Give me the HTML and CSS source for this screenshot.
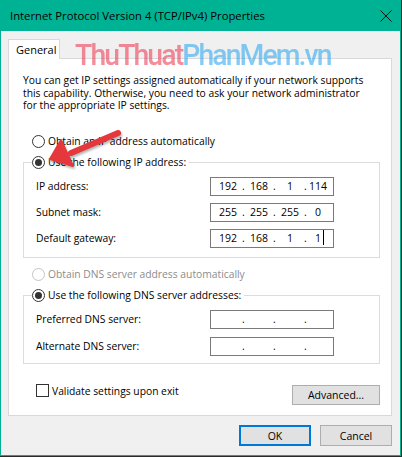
FILE: index.html
```html
<!DOCTYPE html>
<html>
  <head>
    <meta charset="utf-8" />
    <title>Internet Protocol Version 4 (TCP/IPv4) Properties</title>
    <link rel="stylesheet" href="styles.css">
  </head>

  <body>
    <div class="window">
      <div class="titlebar">
        <span class="title">Internet Protocol Version 4 (TCP/IPv4) Properties</span>
        <svg class="close" width="12" height="12" viewBox="0 0 12 12">
          <path d="M0.5 0.5 L11.5 11.5 M11.5 0.5 L0.5 11.5" stroke="#111" stroke-width="1" fill="none" />
        </svg>
      </div>

      <div class="body">
        <div class="tabs">
          <div class="tab">General</div>
        </div>

        <div class="panel">
          <p class="intro">
            You can get IP settings assigned automatically if your network supports<br />
            this capability. Otherwise, you need to ask your network administrator<br />
            for the appropriate IP settings.
          </p>

          <div class="option option-first">
            <span class="radio"></span>
            <span>Obtain an IP address automatically</span>
          </div>

          <fieldset class="group">
            <legend class="option">
              <span class="radio checked"></span>
              <span>Use the following IP address:</span>
            </legend>
            <div class="row">
              <span class="label">IP address:</span>
              <div class="ip">
                <span class="oct">192</span><span class="dot">.</span>
                <span class="oct">168</span><span class="dot">.</span>
                <span class="oct">1</span><span class="dot">.</span>
                <span class="oct last">114</span>
              </div>
            </div>
            <div class="row">
              <span class="label">Subnet mask:</span>
              <div class="ip">
                <span class="oct">255</span><span class="dot">.</span>
                <span class="oct">255</span><span class="dot">.</span>
                <span class="oct">255</span><span class="dot">.</span>
                <span class="oct last">0</span>
              </div>
            </div>
            <div class="row">
              <span class="label">Default gateway:</span>
              <div class="ip">
                <span class="oct">192</span><span class="dot">.</span>
                <span class="oct">168</span><span class="dot">.</span>
                <span class="oct">1</span><span class="dot">.</span>
                <span class="oct last">1<span class="caret"></span></span>
              </div>
            </div>
          </fieldset>

          <div class="option option-dns disabled">
            <span class="radio"></span>
            <span>Obtain DNS server address automatically</span>
          </div>

          <fieldset class="group group-dns">
            <legend class="option">
              <span class="radio checked"></span>
              <span>Use the following DNS server addresses:</span>
            </legend>
            <div class="row">
              <span class="label">Preferred DNS server:</span>
              <div class="ip">
                <span class="oct"></span><span class="dot">.</span>
                <span class="oct"></span><span class="dot">.</span>
                <span class="oct"></span><span class="dot">.</span>
                <span class="oct last"></span>
              </div>
            </div>
            <div class="row">
              <span class="label">Alternate DNS server:</span>
              <div class="ip">
                <span class="oct"></span><span class="dot">.</span>
                <span class="oct"></span><span class="dot">.</span>
                <span class="oct"></span><span class="dot">.</span>
                <span class="oct last"></span>
              </div>
            </div>
          </fieldset>

          <div class="footer-row">
            <label class="check">
              <span class="box"></span>
              <span>Validate settings upon exit</span>
            </label>
            <button class="btn btn-adv">Advanced...</button>
          </div>
        </div>

        <div class="actions">
          <button class="btn btn-ok">OK</button>
          <button class="btn">Cancel</button>
        </div>
      </div>

      <div class="watermark"><span class="wm-red">ThuThuat</span><span class="wm-blue">PhanMem.vn</span></div>

      <svg class="arrow" width="80" height="50" viewBox="0 0 80 50">
        <path d="M73 6 L26 26" stroke="#e5383d" stroke-width="6" stroke-linecap="round" fill="none" />
        <path d="M5 32 L16 13 L28 39 Z" fill="#e5383d" stroke="#e5383d" stroke-width="2" stroke-linejoin="round" />
      </svg>
    </div>
  </body>
</html>
```

FILE: styles.css
```css
html,
body {
  margin: 0;
  padding: 0;
  background: #2a2a2a;
}

.window {
  position: relative;
  width: 401px;
  height: 456px;
  box-sizing: border-box;
  border: 1px solid #00b294;
  border-top: 0;
  background: #f0f0f0;
  font-family: "Open Sans", "Noto Sans", sans-serif;
  font-size: 10.3px;
  color: #000000;
}

.titlebar {
  height: 31px;
  background: #00b294;
  display: flex;
  align-items: center;
  justify-content: space-between;
  padding: 0 8px 0 9px;
}

.title {
  font-size: 11.3px;
}

.close {
  margin-top: 1px;
}

.body {
  padding: 8px 8px 0 7px;
}

.tabs {
  display: flex;
}

.tab {
  width: 52px;
  height: 20px;
  box-sizing: border-box;
  border: 1px solid #d9d9d9;
  border-bottom: 0;
  background: #ffffff;
  margin-bottom: -1px;
  padding: 2px 0 0 7px;
  font-size: 11px;
  position: relative;
  z-index: 1;
}

.panel {
  width: 384px;
  height: 358px;
  box-sizing: border-box;
  border: 1px solid #d9d9d9;
  background: #ffffff;
  padding: 15px 10px 0 14px;
}

.intro {
  margin: 0;
  line-height: 12.5px;
  white-space: nowrap;
}

.option {
  display: flex;
  align-items: center;
  height: 13px;
  line-height: 13px;
}

.option-first {
  margin: 23px 0 0 9px;
}

.radio {
  width: 13px;
  height: 13px;
  box-sizing: border-box;
  border: 1px solid #333333;
  border-radius: 50%;
  margin-right: 3px;
  display: flex;
  align-items: center;
  justify-content: center;
  background: #ffffff;
}

.radio.checked::after {
  content: "";
  width: 7px;
  height: 7px;
  border-radius: 50%;
  background: #333333;
}

.disabled {
  color: #8c8c8c;
}

.disabled .radio {
  border-color: #c4c4c4;
}

.group {
  margin: 8px 0 0 0;
  padding: 0 0 9px 12px;
  width: 357px;
  box-sizing: border-box;
  border: 1px solid #dcdcdc;
}

.group legend {
  margin-left: -4px;
  padding: 0 3px 0 0;
}

.row {
  display: flex;
  align-items: center;
  margin-top: 7px;
}

.group .row:first-of-type {
  margin-top: 8px;
}

.label {
  width: 174px;
}

.ip {
  width: 124px;
  height: 19px;
  box-sizing: border-box;
  border: 1px solid #7a7a7a;
  display: flex;
  align-items: center;
  padding-left: 5px;
  font-size: 10.5px;
}

.oct {
  width: 24px;
  text-align: center;
  position: relative;
}

.oct.last {
  width: 18px;
}

.dot {
  width: 7px;
  text-align: center;
}

.caret {
  position: absolute;
  top: -1px;
  width: 1px;
  height: 15px;
  background: #000000;
  margin-left: 2px;
}

.option-dns {
  margin: 10px 0 0 9px;
}

.group-dns {
  padding-bottom: 7px;
}

.group-dns .row + .row {
  margin-top: 8px;
}

.footer-row {
  display: flex;
  justify-content: space-between;
  align-items: flex-start;
  width: 357px;
  margin-top: 20px;
}

.check {
  display: flex;
  align-items: center;
  margin-left: 13px;
}

.box {
  width: 13px;
  height: 13px;
  box-sizing: border-box;
  border: 1px solid #333333;
  margin-right: 3px;
}

.btn {
  font-family: inherit;
  font-size: 10.5px;
  color: #000000;
  background: #e1e1e1;
  border: 1px solid #adadad;
  width: 72px;
  height: 21px;
  padding: 0;
  margin: 0;
}

.btn-adv {
  width: 88px;
  height: 20px;
  margin-top: 1px;
}

.actions {
  display: flex;
  justify-content: flex-end;
  gap: 9px;
  padding: 9px 0 0 0;
}

.btn-ok {
  border: 2px solid #0078d7;
}

.watermark {
  position: absolute;
  left: 74px;
  top: 37px;
  font-family: Roboto, sans-serif;
  font-weight: 500;
  font-size: 30px;
  letter-spacing: -2px;
  line-height: 36px;
  transform: scaleX(0.945);
  transform-origin: left center;
  z-index: 2;
}

.wm-red {
  color: rgba(236, 64, 90, 0.6);
}

.wm-blue {
  color: rgba(50, 170, 240, 0.6);
}

.arrow {
  position: absolute;
  left: 44px;
  top: 127px;
  z-index: 3;
  filter: drop-shadow(1px 2px 1px rgba(0, 0, 0, 0.3));
}
```
